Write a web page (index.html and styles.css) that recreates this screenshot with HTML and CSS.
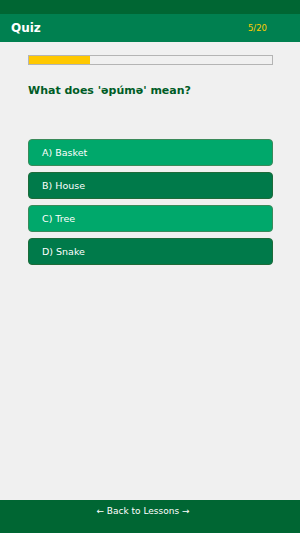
FILE: index.html
```html
<!DOCTYPE html>
<html lang="en">
<head>
    <meta charset="UTF-8">
    <meta name="viewport" content="width=device-width, initial-scale=1.0">
    <title>Quiz</title>
    <link rel="stylesheet" href="styles.css">
</head>
<body>
    <div class="top-strip"></div>
    <div class="header">
        <span class="title">Quiz</span>
        <span class="counter">5/20</span>
    </div>

    <div class="content">
        <div class="progress"><div class="progress-fill" style="width: 25%"></div></div>
        <h2 class="question">What does 'əpúmə' mean?</h2>

        <div class="options">
            <div class="option">A) Basket</div>
            <div class="option dark">B) House</div>
            <div class="option">C) Tree</div>
            <div class="option dark">D) Snake</div>
        </div>
    </div>

    <div class="footer">← Back to Lessons →</div>
</body>
</html>
```

FILE: styles.css
```css
body {
    font-family: "DejaVu Sans", sans-serif;
    background-color: #f0f0f0;
    margin: 0;
    height: 533px;
    display: flex;
    flex-direction: column;
}
.top-strip {
    height: 14px;
    background: #006633;
}
.header {
    height: 28px;
    background: #008050;
    display: flex;
    justify-content: space-between;
    align-items: center;
    padding: 0 33px 0 11px;
}
.title {
    color: #ffffff;
    font-weight: bold;
    font-size: 12px;
}
.counter {
    color: #ffcc00;
    font-size: 8.5px;
}
.content {
    flex-grow: 1;
    padding: 13px 27px 0 28px;
}
.progress {
    height: 8px;
    border: 1px solid #b4b4b4;
    background: #f0f0f0;
}
.progress-fill {
    height: 100%;
    background: #ffc800;
}
.question {
    color: #005c26;
    font-size: 11px;
    font-weight: bold;
    margin: 19px 0 42px 0;
}
.options {
    display: flex;
    flex-direction: column;
    gap: 6px;
}
.option {
    height: 25px;
    line-height: 25px;
    padding-left: 13px;
    border: 1px solid #3a8a5a;
    border-radius: 4px;
    background: #00a86b;
    color: #ffffff;
    font-size: 9.5px;
}
.option.dark {
    background: #007a4a;
    border-color: #1e6b3a;
}
.footer {
    height: 33px;
    background: #006633;
    color: #ffffff;
    font-size: 9px;
    text-align: center;
    padding-right: 14px;
    line-height: 22px;
}
```
